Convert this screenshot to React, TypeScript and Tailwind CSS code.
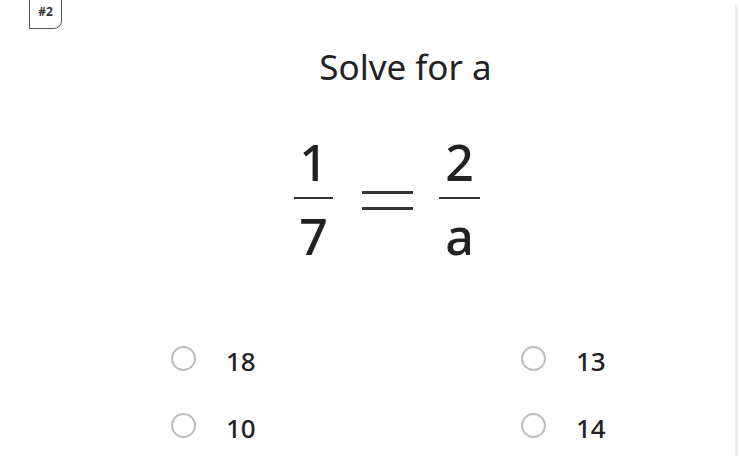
import React from "react";

const font = { fontFamily: '"Noto Sans", "Open Sans", sans-serif' };

function Fraction({ top, bottom, width }: { top: string; bottom: string; width: string }) {
  return (
    <div className={`flex flex-col items-center ${width}`}>
      <div className="text-[50px] leading-[50px] h-[50px] font-medium text-[#222]">{top}</div>
      <div className="w-full h-[2px] bg-[#333] mt-[10px]" />
      <div className="text-[50px] leading-[50px] h-[50px] font-medium text-[#222] mt-[12px]">{bottom}</div>
    </div>
  );
}

function Option({ label }: { label: string }) {
  return (
    <div className="flex items-center h-[34px]">
      <div className="w-[25px] h-[25px] rounded-full border-2 border-[#bdbdbd]" />
      <div className="ml-[30px] text-[26px] leading-none font-medium text-[#222] mt-[5px]">{label}</div>
    </div>
  );
}

export default function App() {
  return (
    <div className="w-[740px] h-[461px] bg-white flex overflow-hidden" style={font}>
      <div className="flex-1 flex flex-col">
        <div className="ml-[29px] -mt-[2px] w-[33px] h-[31px] border border-[#555] rounded-br-lg flex items-center justify-center">
          <span className="text-[12px] font-bold text-[#333] -mt-[3px]">#2</span>
        </div>

        <div className="pl-[76px] mt-[18px] text-center text-[35px] leading-[40px] text-[#222]">
          Solve for a
        </div>

        <div className="flex items-center ml-[294px] mt-[50px]">
          <Fraction top="1" bottom="7" width="w-[39px]" />
          <div className="ml-[29px] w-[51px] flex flex-col gap-[13px] mt-[2px]">
            <div className="h-[3px] bg-[#333]" />
            <div className="h-[3px] bg-[#333]" />
          </div>
          <Fraction top="2" bottom="a" width="w-[41px] ml-[26px]" />
        </div>

        <div className="grid grid-cols-[350px_200px] ml-[171px] mt-[80px] gap-y-[33px]">
          <Option label="18" />
          <Option label="13" />
          <Option label="10" />
          <Option label="14" />
        </div>
      </div>
      <div className="w-[3px] bg-[#eeeeee] my-[5px] mr-[2px]" />
    </div>
  );
}
